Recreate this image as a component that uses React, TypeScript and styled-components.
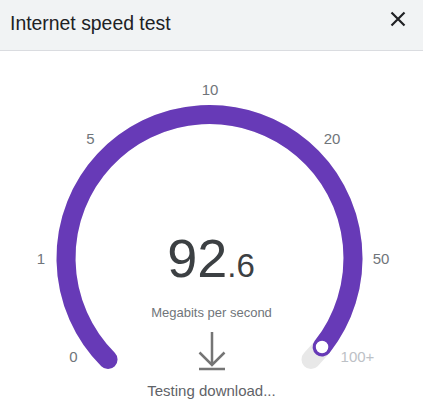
import React from "react";
import styled, { createGlobalStyle } from "styled-components";

const Global = createGlobalStyle`
  html, body { margin: 0; padding: 0; background: #ffffff; }
  body { font-family: "Liberation Sans", Arial, sans-serif; }
`;

const Panel = styled.div`
  width: 423px;
  height: 413px;
  display: flex;
  flex-direction: column;
  background: #ffffff;
  overflow: hidden;
`;

const Header = styled.header`
  flex: none;
  height: 51px;
  box-sizing: border-box;
  background: #f1f3f4;
  border-bottom: 1px solid #dadce0;
  display: flex;
  justify-content: space-between;
  align-items: flex-start;
  padding: 0 17px 0 10px;
`;

const Title = styled.h1`
  margin: 11px 0 0;
  font-size: 19.4px;
  line-height: 24px;
  font-weight: 400;
  color: #202124;
`;

const CloseButton = styled.button`
  margin-top: 11px;
  width: 16px;
  height: 16px;
  padding: 0;
  border: 0;
  background: transparent;
  display: flex;
  cursor: pointer;
`;

const Main = styled.main`
  position: relative;
  flex: 1;
  display: flex;
  flex-direction: column;
  align-items: center;
`;

const GaugeSvg = styled.svg`
  position: absolute;
  left: 0;
  top: 0;
  width: 423px;
  height: 362px;
`;

const Readout = styled.div`
  position: relative;
  margin-top: 180px;
  height: 54px;
  font-size: 54px;
  line-height: 54px;
  color: #3c4043;
  white-space: nowrap;
  margin-left: -1px;
`;

const Decimal = styled.span`
  font-size: 33px;
`;

const Unit = styled.div`
  position: relative;
  margin-top: 20px;
  font-size: 13px;
  line-height: 16px;
  color: #70757a;
`;

const DownloadIcon = styled.svg`
  position: relative;
  margin-top: 9px;
  width: 28px;
  height: 41px;
  display: block;
`;

const Status = styled.div`
  position: relative;
  margin-top: 11px;
  font-size: 15px;
  line-height: 18px;
  color: #5f6368;
`;

const CX = 209.5;
const CY = 258;
const R = 143.5;

const pt = (deg: number) => {
  const a = (deg * Math.PI) / 180;
  return [CX + R * Math.cos(a), CY + R * Math.sin(a)];
};

const arc = (from: number, to: number) => {
  const [x1, y1] = pt(from);
  const [x2, y2] = pt(to);
  const large = to - from > 180 ? 1 : 0;
  return `M ${x1} ${y1} A ${R} ${R} 0 ${large} 1 ${x2} ${y2}`;
};

const labels = [
  { t: "0", x: 73.5, y: 362, muted: false },
  { t: "1", x: 41, y: 264, muted: false },
  { t: "5", x: 90.5, y: 144, muted: false },
  { t: "10", x: 210, y: 95, muted: false },
  { t: "20", x: 332, y: 144, muted: false },
  { t: "50", x: 381, y: 264, muted: false },
  { t: "100+", x: 357.5, y: 362, muted: true },
];

export default function App() {
  const value = 92.6;
  const endDeg = 360 + ((value - 50) / 50) * 45;
  const [kx, ky] = pt(endDeg);
  return (
    <>
      <Global />
      <Panel>
        <Header>
          <Title>Internet speed test</Title>
          <CloseButton aria-label="Close">
            <svg width="16" height="16" viewBox="0 0 16 16">
              <path d="M1.5 1.5 L14.5 14.5 M14.5 1.5 L1.5 14.5" stroke="#202124" strokeWidth="2.2" fill="none" />
            </svg>
          </CloseButton>
        </Header>
        <Main>
          <GaugeSvg viewBox="0 51 423 362">
            <path d={arc(135, 405)} stroke="#e8e8e8" strokeWidth="19" fill="none" strokeLinecap="round" />
            <path d={arc(135, endDeg)} stroke="#673ab7" strokeWidth="19" fill="none" strokeLinecap="round" />
            <circle cx={kx} cy={ky} r="7" fill="#ffffff" stroke="#673ab7" strokeWidth="1.5" />
            {labels.map((l) => (
              <text
                key={l.t}
                x={l.x}
                y={l.y}
                textAnchor="middle"
                fontFamily="'Liberation Sans', Arial, sans-serif"
                fontSize="15"
                fill={l.muted ? "#bdc1c6" : "#70757a"}
              >
                {l.t}
              </text>
            ))}
          </GaugeSvg>
          <Readout>
            92<Decimal>.6</Decimal>
          </Readout>
          <Unit>Megabits per second</Unit>
          <DownloadIcon viewBox="0 0 28 41">
            <path d="M14 2 V35 M1.5 22.5 L14 35 L26.5 22.5 M1 39 H27" stroke="#757575" strokeWidth="2.5" fill="none" />
          </DownloadIcon>
          <Status>Testing download...</Status>
        </Main>
      </Panel>
    </>
  );
}
